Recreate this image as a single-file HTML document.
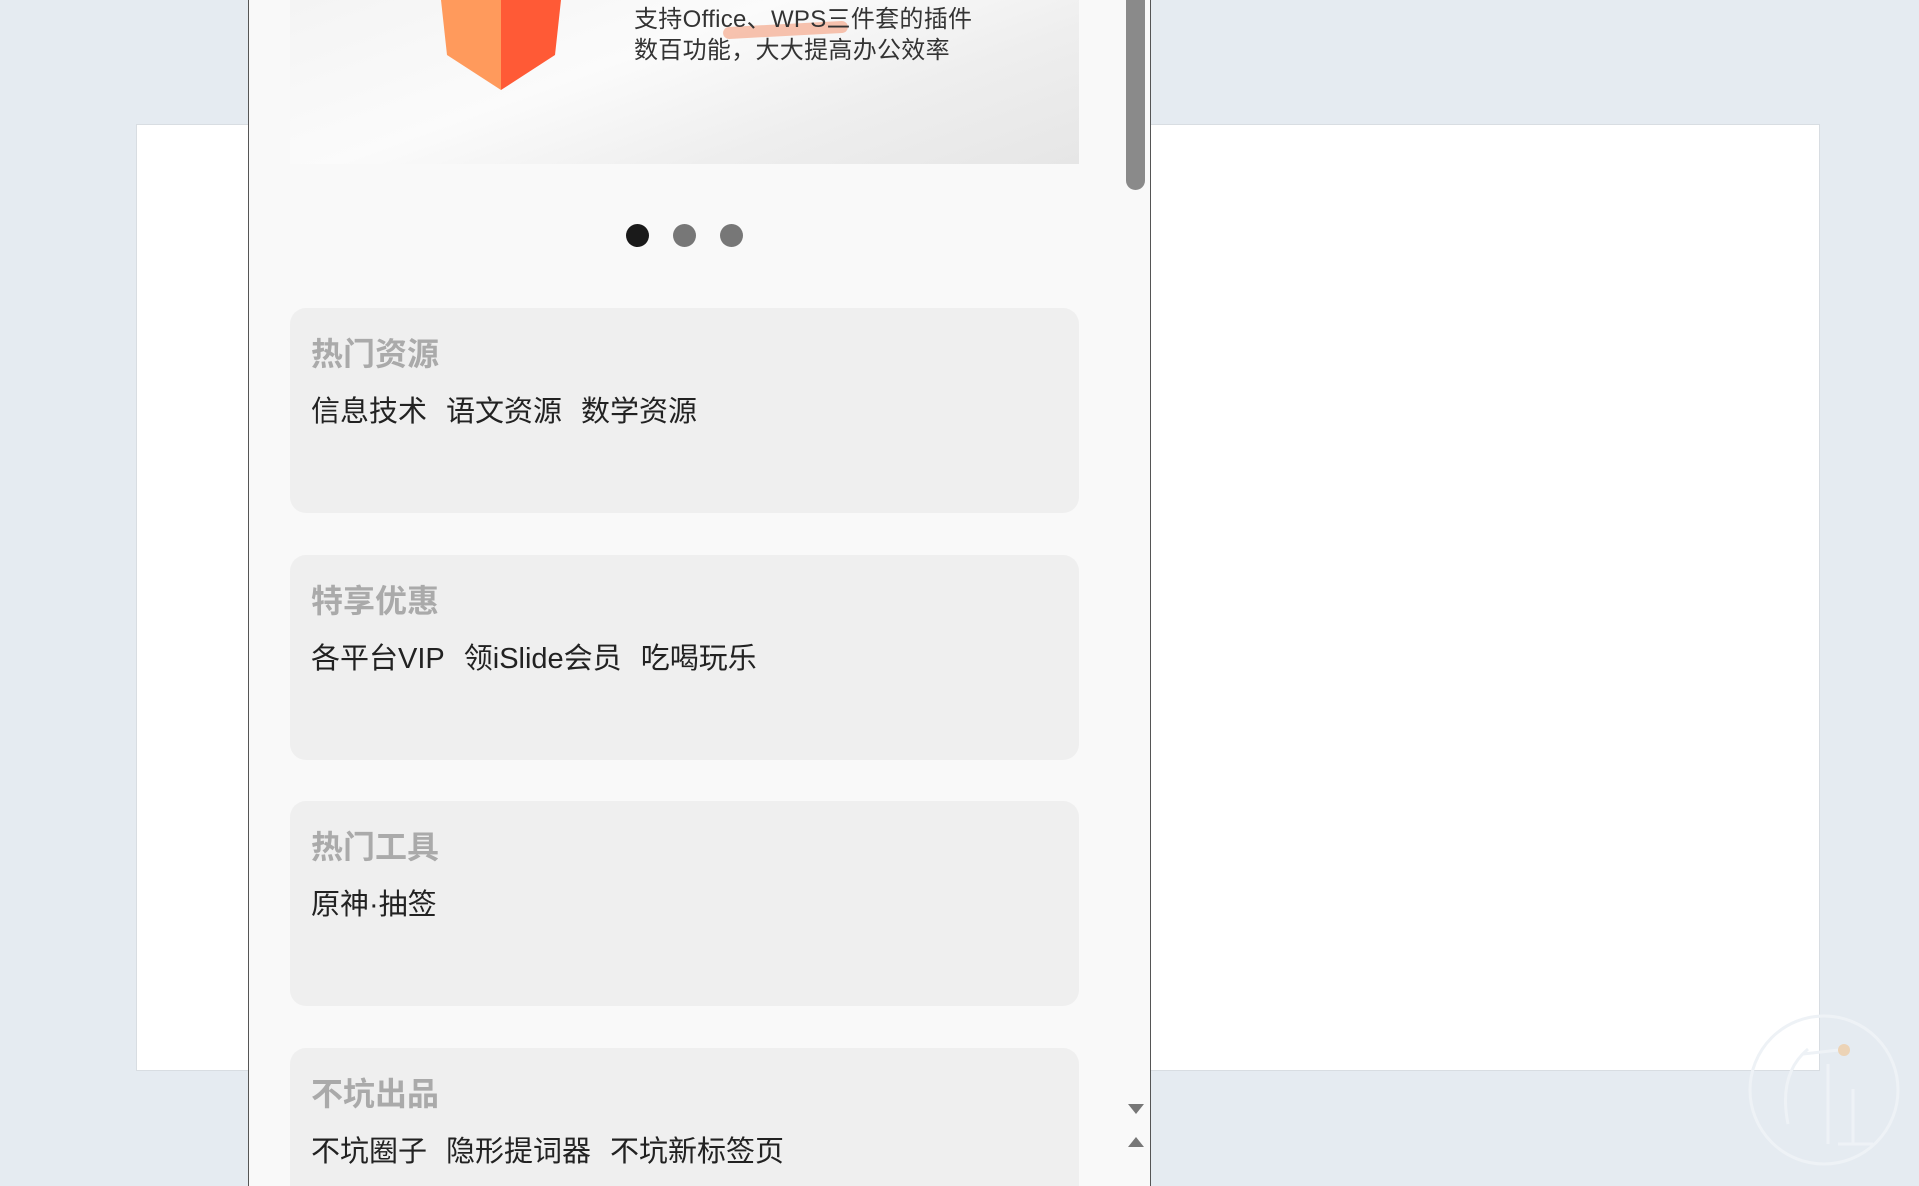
<!DOCTYPE html>
<html><head><meta charset="utf-8"><style>
*{margin:0;padding:0;box-sizing:border-box}
html,body{overflow:hidden}
body{width:1919px;height:1186px;background:#e5ebf1;font-family:"Liberation Sans","Noto Sans CJK SC",sans-serif;position:relative}
.card{position:absolute;left:136px;top:124px;width:1684px;height:947px;background:#fff;border:1px solid #d8dde2}
.panel{position:absolute;left:248px;top:0;width:903px;height:1186px;background:#f9f9f9;border-left:1px solid #555;border-right:1px solid #555;overflow:hidden}
.banner{position:absolute;left:41px;top:0;width:789px;height:164px;background:linear-gradient(160deg,#f4f4f4,#fbfbfb 40%,#eeeeee 70%,#e6e6e6)}
.btxt{position:absolute;left:344px;font-size:24px;color:#333;line-height:30px;letter-spacing:0.3px}
.dot{position:absolute;top:224px;width:23px;height:23px;border-radius:50%;background:#777}
.box{position:absolute;left:41px;width:789px;height:205px;background:#efefef;border-radius:16px}
.box h3{position:absolute;left:21px;top:26px;font-size:32px;color:#aaa;font-weight:bold;line-height:40px}
.box p{position:absolute;left:21px;top:86px;font-size:29px;color:#222;line-height:36px;white-space:nowrap}
.box p span{margin-right:19px}
.sb{position:absolute;left:877px;top:0;width:19px;height:190px;background:#8a8a8a;border-radius:0 0 10px 10px}
</style></head><body>
<div class="card"></div>
<svg style="position:absolute;left:1748px;top:1014px" width="152" height="152"><circle cx="76" cy="76" r="74" fill="none" stroke="#eef2f6" stroke-width="3"/><path d="M40 110 Q30 60 60 35 M55 40 L100 35 M80 50 V130 M105 75 V130 H125 M110 130 H90" fill="none" stroke="#eef2f6" stroke-width="3"/><circle cx="96" cy="36" r="6" fill="#ecd3b6"/></svg>
<div class="panel">
<div class="banner">
<svg style="position:absolute;left:151px;top:0" width="124" height="92"><polygon points="0,0 60,0 60,90 6,55" fill="#ff9a5c"/><polygon points="60,0 120,0 114,55 60,90" fill="#ff5a36"/></svg>
<div style="position:absolute;left:433px;top:24px;width:125px;height:12px;background:#f6b7a0;border-radius:6px;transform:rotate(-3deg);opacity:.85"></div>
<div class="btxt" style="top:5px">支持Office、WPS三件套的插件</div>
<div class="btxt" style="top:36px">数百功能，大大提高办公效率</div>
</div>
<div class="dot" style="left:377px;background:#1a1a1a"></div>
<div class="dot" style="left:424px"></div>
<div class="dot" style="left:471px"></div>
<div class="box" style="top:308px"><h3>热门资源</h3><p><span>信息技术</span><span>语文资源</span><span>数学资源</span></p></div>
<div class="box" style="top:555px"><h3>特享优惠</h3><p><span>各平台VIP</span><span>领iSlide会员</span><span>吃喝玩乐</span></p></div>
<div class="box" style="top:801px"><h3>热门工具</h3><p><span>原神·抽签</span></p></div>
<div class="box" style="top:1048px;height:138px;border-radius:16px 16px 0 0"><h3>不坑出品</h3><p><span>不坑圈子</span><span>隐形提词器</span><span>不坑新标签页</span></p></div>
<div class="sb"></div>
<svg style="position:absolute;left:877px;top:1102px" width="20" height="50"><polygon points="2,2 18,2 10,12" fill="#777"/><polygon points="2,45 18,45 10,35" fill="#777"/></svg>
</div>
</body></html>
